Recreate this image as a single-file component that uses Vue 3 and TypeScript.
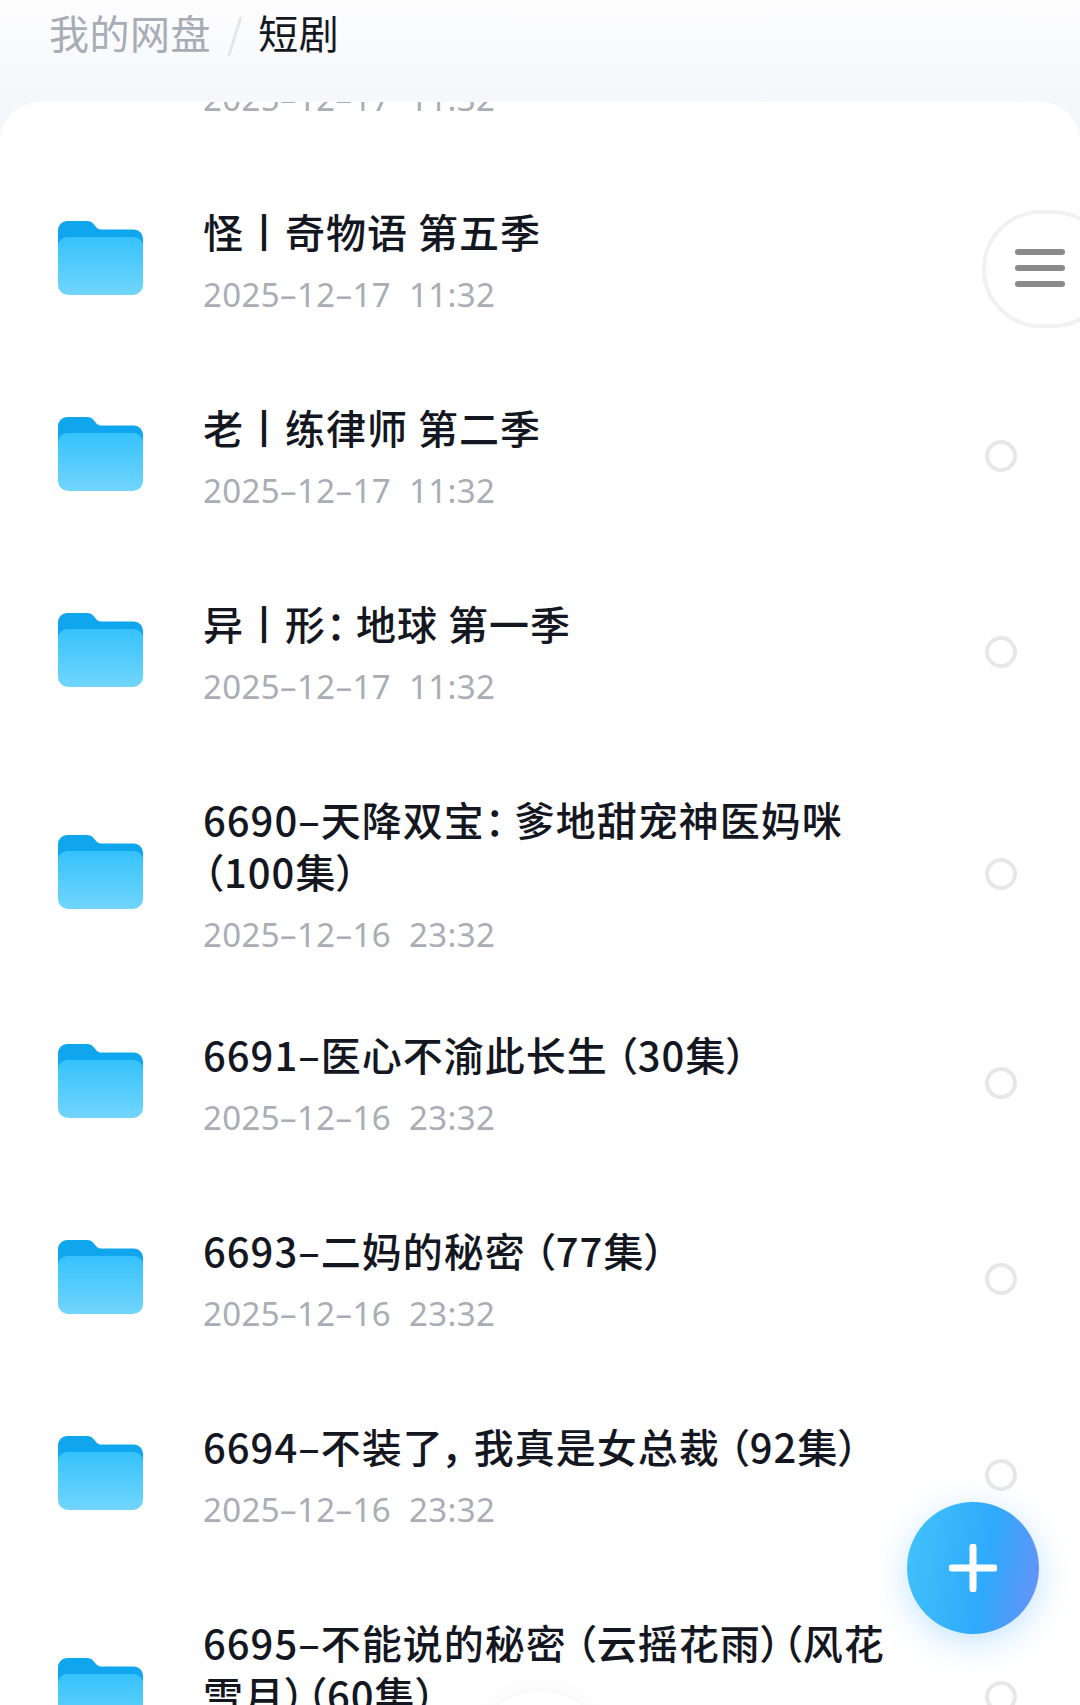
<template>
  <div class="page">
    <header class="topbar">
      <span class="crumb">我的网盘</span>
      <span class="sep">/</span>
      <span class="crumb current">短剧</span>
    </header>

    <main class="sheet">
      <ul class="list">
        <li v-for="item in files" :key="item.date + item.title" class="row">
          <div class="row-inner">
            <svg class="folder" viewBox="0 0 85 74" aria-hidden="true">
              <defs>
                <linearGradient id="folderFront" x1="0" y1="0" x2="0" y2="1">
                  <stop offset="0" stop-color="#35c2fc" />
                  <stop offset="1" stop-color="#72d5fc" />
                </linearGradient>
              </defs>
              <path
                d="M0 9a9 9 0 0 1 9-9h20c3 0 5 1 6.500 3l3 3.500c1.500 1.500 3 2 5 2h32.500a9 9 0 0 1 9 9v20H0z"
                fill="#0fa6ee"
              />
              <path
                d="M0 25a9 9 0 0 1 9-9h67a9 9 0 0 1 9 9v39a10 10 0 0 1-10 10H10A10 10 0 0 1 0 64z"
                fill="url(#folderFront)"
              />
            </svg>
            <div class="info">
              <div class="name">{{ item.title }}</div>
              <div class="time">{{ item.date }}</div>
            </div>
            <span v-if="item.check" class="check"></span>
          </div>
        </li>
      </ul>
    </main>

    <div class="side-tab">
      <i></i>
      <i></i>
      <i></i>
    </div>

    <button class="fab" type="button" aria-label="新建">
      <svg viewBox="0 0 48 48" width="48" height="48" aria-hidden="true">
        <path d="M24 3v42M3 24h42" stroke="#fff" stroke-width="7" stroke-linecap="round" />
      </svg>
    </button>

    <div class="dock"></div>
  </div>
</template>

<script setup lang="ts">
interface FileItem {
  title: string;
  date: string;
  check: boolean;
}

// full-width punctuation, written as escapes so it stays full width
const L = "\uFF08";
const R = "\uFF09";
const COLON = "\uFF1A";
const COMMA = "\uFF0C";
// thin space: the list font sets its punctuation a little looser than palt does
const THIN = "\u2009";

const files: FileItem[] = [
  { title: "", date: "2025–12–17  11:32", check: false },
  { title: "怪丨奇物语 第五季", date: "2025–12–17  11:32", check: false },
  { title: "老丨练律师 第二季", date: "2025–12–17  11:32", check: true },
  { title: `异丨形${COLON}${THIN}地球 第一季`, date: "2025–12–17  11:32", check: true },
  { title: `6690–天降双宝${COLON}${THIN}爹地甜宠神医妈咪${THIN}${L}100集${R}`, date: "2025–12–16  23:32", check: true },
  { title: `6691–医心不渝此长生${THIN}${L}30集${R}`, date: "2025–12–16  23:32", check: true },
  { title: `6693–二妈的秘密${THIN}${L}77集${R}`, date: "2025–12–16  23:32", check: true },
  { title: `6694–不装了${COMMA}${THIN}我真是女总裁${THIN}${L}92集${R}`, date: "2025–12–16  23:32", check: true },
  { title: `6695–不能说的秘密${THIN}${L}云摇花雨${R}${L}风花雪月${R}${L}60集${R}`, date: "2025–12–16  23:32", check: true },
];
</script>

<style scoped>
.page {
  position: relative;
  width: 1080px;
  height: 1705px;
  overflow: hidden;
  background: linear-gradient(180deg, #fdfdfe 0, #f5f7fa 102px);
  font-family: "Noto Sans CJK SC", "Noto Sans", sans-serif;
}

.topbar {
  display: flex;
  align-items: center;
  box-sizing: border-box;
  height: 102px;
  padding: 0 0 38px 49px;
  font-size: 40px;
  letter-spacing: 0.5px;
}

.crumb {
  color: #a8acb6;
}

.crumb.current {
  color: #15181f;
}

.sep {
  margin: 0 15px 0 16px;
  color: #e3e5ea;
}

.sheet {
  height: 1603px;
  overflow: hidden;
  background: #fff;
  border-radius: 40px 40px 0 0;
}

.list {
  margin: -138px 0 0;
  padding: 0;
  list-style: none;
}

.row {
  min-height: 196px;
  padding: 39px 0 26px;
  box-sizing: border-box;
}

.row-inner {
  display: flex;
  align-items: center;
  padding: 0 63px 0 58px;
}

.folder {
  flex: none;
  width: 85px;
  height: 74px;
}

.info {
  flex: none;
  width: 700px;
  margin-left: 60px;
  padding-top: 6px;
}

.name {
  min-height: 52px;
  color: #14171f;
  font-size: 40px;
  font-weight: 500;
  font-feature-settings: "palt";
  line-height: 52px;
  letter-spacing: 1px;
}

.time {
  margin-top: 16px;
  color: #a9adb5;
  font-family: "Noto Sans", sans-serif;
  font-size: 33px;
  line-height: 44px;
  letter-spacing: 0.4px;
  white-space: pre;
}

.check {
  flex: none;
  box-sizing: border-box;
  width: 32px;
  height: 32px;
  margin: 3px 0 0 auto;
  border: 4px solid #e7e7e7;
  border-radius: 50%;
}

.side-tab {
  position: absolute;
  top: 210px;
  left: 982px;
  display: flex;
  flex-direction: column;
  gap: 10px;
  box-sizing: border-box;
  width: 130px;
  height: 118px;
  padding: 35px 0 0 29px;
  background: #fff;
  border: 4px solid #f1f1f1;
  border-radius: 59px;
}

.side-tab i {
  display: block;
  width: 50px;
  height: 6px;
  background: #8b8b8b;
  border-radius: 3px;
}

.fab {
  position: absolute;
  top: 1502px;
  left: 907px;
  display: flex;
  align-items: center;
  justify-content: center;
  width: 132px;
  height: 132px;
  padding: 0;
  background: linear-gradient(100deg, #41c4fb 0%, #2fa9fb 60%, #6d8ff8 100%);
  border: none;
  border-radius: 50%;
  box-shadow: 0 8px 34px rgba(70, 170, 255, 0.32);
}

.dock {
  position: absolute;
  top: 1692px;
  left: 470px;
  width: 140px;
  height: 140px;
  background: #fff;
  border-radius: 50%;
  box-shadow: 0 -3px 22px rgba(0, 0, 0, 0.04);
}
</style>
